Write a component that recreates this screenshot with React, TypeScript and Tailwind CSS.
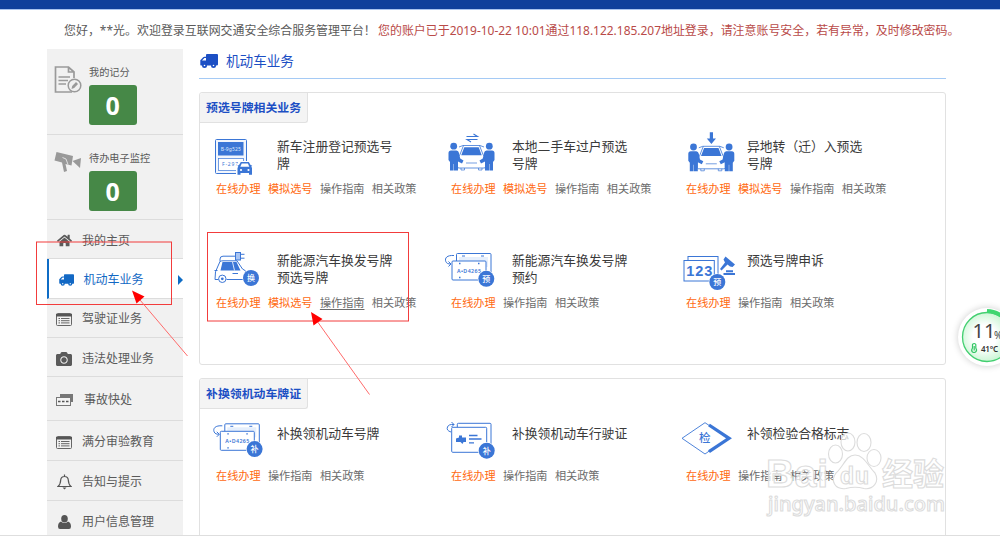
import React from 'react';
import { FaCamera, FaHome } from 'react-icons/fa';

const BLUE = '#3b76d6';

const Badge = ({ x, y, text }: { x: number; y: number; text: string }) => (
  <g>
    <circle cx={x} cy={y} r="8.6" fill="#fff" />
    <circle cx={x} cy={y} r="8" fill={BLUE} />
    <text x={x} y={y + 3} fontSize="8" fontWeight="500" fill="#fff" textAnchor="middle">{text}</text>
  </g>
);

const Curl = () => (
  <g fill="none" stroke={BLUE} strokeWidth="1">
    <path d="M19 11.5C12 11 9.500 14 10.800 17.500C11.500 19.500 13.500 20 15.500 20" />
    <path d="M13.500 17.500L16 20L13.500 22.500" />
  </g>
);

const TruckIcon = ({ width, height }: { width: number; height: number }) => (
  <svg width={width} height={height} viewBox="0 0 18 14" fill="currentColor">
    <path fillRule="evenodd" d="M7 0H17Q18 0 18 1V10.500Q18 11.600 16.500 11.600H1.200Q0 11.600 .3 10.300V6.200L3.200 3.200Q3.700 2.700 4.500 2.700H6V1Q6 0 7 0ZM2 6.500H6V4H4.400Z" />
    <circle cx="4.500" cy="11.500" r="2.500" />
    <circle cx="13.500" cy="11.500" r="2.500" />
    <circle cx="4.500" cy="11.500" r=".8" fill="#fff" />
    <circle cx="13.500" cy="11.500" r=".8" fill="#fff" />
  </svg>
);

const NewPlateIcon = () => (
  <g>
    <rect x="15.500" y="9.500" width="31" height="34" rx="1" fill="#f2f6fd" stroke={BLUE} />
    <rect x="18" y="12" width="25.500" height="13.500" fill={BLUE} />
    <text x="30.800" y="20.500" fontSize="5" fill="#dce8fb" textAnchor="middle" textLength="20">B-9g525</text>
    <rect x="18.500" y="28.500" width="25" height="12" fill="#fff" stroke={BLUE} strokeWidth=".7" />
    <text x="22" y="36" fontSize="5" fill={BLUE} textLength="16">F-297</text>
    <path d="M36 45V36L39 31H50L53 36V45Z" fill="#fff" />
    <path d="M37.500 44.800V38L38.300 36.500L37.300 35.700L39 35L40.800 32H48.800L50.600 35L52.300 35.700L51.300 36.500L52 38V44.800H49V43H40.500V44.800Z" fill={BLUE} />
    <path d="M41.700 33.500H47.900L49.300 36.800H40.300Z" fill="#fff" />
    <circle cx="41" cy="40" r="1.100" fill="#fff" />
    <circle cx="48.500" cy="40" r="1.100" fill="#fff" />
  </g>
);

const Person = () => (
  <g fill={BLUE}>
    <circle cx="18.700" cy="16.200" r="3.400" />
    <path d="M13.500 23Q13.500 20.500 16 20.500H21.500Q23.500 20.500 24 23L25.200 28.600L28.500 30.500L27 33.500L23 31.500V40.500H19V34H18.600V40.500H15V32L13.500 30Z" />
  </g>
);

const PeopleCar = () => (
  <g>
    <path d="M24 17L28 15.500H45L49 17M28.500 15.500L25 24.500L22.500 28V37Q22.500 38 24 38H49Q50.500 38 50.500 37V28L48 24.500L44.500 15.500" fill="none" stroke={BLUE} strokeWidth=".8" />
    <path d="M29.300 17.300H43.700L46.700 25.300H26.200Z" fill={BLUE} />
    <path d="M31 33H42M26 38V40H29.500V38M43.500 38V40H47V38" fill="none" stroke={BLUE} strokeWidth=".7" />
    <Person />
    <g transform="translate(73 0) scale(-1 1)"><Person /></g>
  </g>
);

const TransferIcon = () => (
  <g>
    <path d="M31.500 6.500H42.500L38.500 4M42.500 9.500H32L36 12" fill="none" stroke={BLUE} strokeWidth="1.100" />
    <PeopleCar />
  </g>
);

const MoveInIcon = () => (
  <g>
    <path d="M39.800 2.300H43V8.500H46L41.400 14L36.800 8.500H39.800Z" fill={BLUE} />
    <g transform="translate(4.800 .8)"><PeopleCar /></g>
  </g>
);

const EnergyCarIcon = () => (
  <g>
    <path d="M20 17.500V15Q20 12.200 23 12.200H35.500" fill="none" stroke={BLUE} />
    <rect x="35.500" y="8.500" width="5" height="7.500" fill="#a9c5f3" stroke={BLUE} />
    <path d="M41 10.300H44.500M41 14.200H44.500" stroke={BLUE} />
    <path d="M18.500 35.500H15Q14.500 27 18 22L20 17.500Q21 16.800 23 16.800H37L42.500 25Q46 26 47 30M26.500 35.500H43" fill="none" stroke={BLUE} />
    <path d="M22.500 18H36.500L40.500 26.500H20.500Z" fill={BLUE} />
    <path d="M32.500 18L34.500 26.500" stroke="#dce8fb" />
    <path d="M32.500 29.500H38M14.500 26.500H17.500" stroke={BLUE} />
    <circle cx="22.300" cy="34.800" r="3.700" fill="#fff" stroke={BLUE} />
    <circle cx="22.300" cy="34.800" r="1.400" fill={BLUE} />
    <Badge x={51} y={34} text="换" />
  </g>
);

const PlatesIcon = ({ text }: { text: string }) => (
  <g>
    <Curl />
    <rect x="21.500" y="9.500" width="34.500" height="24" rx="1" fill="#fff" stroke={BLUE} />
    <rect x="24" y="13" width="29" height="10" fill="#e6effc" />
    <path d="M27 12H30M46 12H49" stroke={BLUE} />
    <rect x="17" y="17" width="34" height="19" rx="1" fill="#fff" stroke={BLUE} />
    <path d="M24 19.500H25.500M43 19.500H44.500M24 33.500H25.500" stroke={BLUE} strokeWidth="1.300" />
    <text x="22" y="28.600" fontSize="5.300" fontWeight="600" fill={BLUE} textLength="24">A•D4265</text>
    <Badge x={51.3} y={34.800} text={text} />
  </g>
);

const AppealIcon = () => (
  <g>
    <rect x="18" y="12.500" width="30" height="21" fill="#fff" stroke={BLUE} />
    <rect x="14" y="16.500" width="30.300" height="20.500" fill="#fff" stroke={BLUE} />
    <text x="16.300" y="32.200" fontSize="14.500" fontWeight="700" fontFamily='"Liberation Sans", sans-serif' fill={BLUE} textLength="26">123</text>
    <path d="M55.500 12.500L65 20.500L62.500 23L60 22.500L57.500 20.500L51.500 26.500L50 25L55 18.500L53.500 15.500Z" fill={BLUE} />
    <path d="M56 27.300H63M53.500 30H65" stroke={BLUE} strokeWidth="1.900" />
    <Badge x={47.300} y={38} text="预" />
  </g>
);

const LicenseIcon = () => (
  <g>
    <path d="M16 15Q11 13.500 12.500 10Q13.500 7 19 7.500M16.500 5L19 7.500L16.500 10" fill="none" stroke={BLUE} />
    <rect x="22.300" y="6.300" width="33.700" height="26" rx="1" fill="#fff" stroke={BLUE} />
    <rect x="16.700" y="10.300" width="35" height="25" rx="1" fill="#fff" stroke={BLUE} />
    <path d="M21 21.500L24 20.500V18.500H27V20.500H31V25H28.500L27.500 27L25.500 25H21Z" fill={BLUE} />
    <path d="M34 18.500H42.500M34 22H46.500M34 25.800H39" stroke={BLUE} strokeWidth="1.300" />
    <Badge x={51.700} y={33.700} text="补" />
  </g>
);

const InspectIcon = () => (
  <g>
    <path d="M40 9L35 5.700L12 21.300L35 37L40 33.500" fill="none" stroke={BLUE} strokeWidth=".9" />
    <path d="M39 8L59 21.300L39 34.700" fill="none" stroke={BLUE} strokeWidth="3.300" />
    <text x="34.700" y="25.300" fontSize="11.500" fontWeight="500" fill={BLUE} textAnchor="middle">检</text>
  </g>
);

interface Service {
  title: string;
  icon: React.ReactNode;
  pick?: boolean;
  underline?: boolean;
}

const plateServices: Service[] = [
  { title: '新车注册登记预选号牌', icon: <NewPlateIcon />, pick: true },
  { title: '本地二手车过户预选号牌', icon: <TransferIcon />, pick: true },
  { title: '异地转（迁）入预选号牌', icon: <MoveInIcon />, pick: true },
  { title: '新能源汽车换发号牌预选号牌', icon: <EnergyCarIcon />, pick: true, underline: true },
  { title: '新能源汽车换发号牌预约', icon: <PlatesIcon text="预" /> },
  { title: '预选号牌申诉', icon: <AppealIcon /> },
];

const reissueServices: Service[] = [
  { title: '补换领机动车号牌', icon: <g transform="translate(3.300 -2.700)"><PlatesIcon text="补" /></g> },
  { title: '补换领机动车行驶证', icon: <LicenseIcon /> },
  { title: '补领检验合格标志', icon: <InspectIcon /> },
];

const ServiceCard = ({ item }: { item: Service }) => (
  <div className="h-[113.5px]">
    <div className="flex h-[52px]">
      <svg width="77" height="52" className="shrink-0 overflow-visible">{item.icon}</svg>
      <h3 className="w-[117px] pt-[8px] text-[12.8px] leading-[17px] text-[#3a3a3a]">{item.title}</h3>
    </div>
    <div className="flex gap-[7.4px] pl-[16px] text-[11.15px] leading-[14px] whitespace-nowrap text-[#6c6c6c]">
      <a className="text-[#ff6a10]">在线办理</a>
      {item.pick && <a className="text-[#ff6a10]">模拟选号</a>}
      <a className={item.underline ? 'underline underline-offset-2' : ''}>操作指南</a>
      <a>相关政策</a>
    </div>
  </div>
);

const Panel = ({ title, items, className }: { title: string; items: Service[]; className: string }) => (
  <section className={`rounded-[3px] border border-[#e1e1e1] ${className}`}>
    <h2 className="h-[30px] w-[108px] rounded-tl-[3px] rounded-br-[3px] border-r border-b border-[#e1e1e1] bg-[#f4f4f4] pl-[6px] text-[11.9px] leading-[28px] font-bold whitespace-nowrap text-[#1c4fc4]">{title}</h2>
    <div className="grid grid-cols-[235px_235px_235px] pt-[7px]">
      {items.map((item) => <ServiceCard key={item.title} item={item} />)}
    </div>
  </section>
);

const ListIcon = () => (
  <svg width="16" height="13" viewBox="0 0 16 13">
    <rect x=".5" y=".5" width="15" height="12" rx="1" fill="none" stroke="#666" />
    <path d="M0 1H16V3.500H0Z" fill="#555" />
    <path d="M2.500 5.500H4M5 5.500H13.500M2.500 7.700H4M5 7.700H13.500M2.500 9.900H4M5 9.900H13.500" stroke="#666" />
  </svg>
);

const BellIcon = () => (
  <svg width="15" height="16" viewBox="0 0 15 16" fill="none" stroke="#555" strokeWidth="1.200">
    <path d="M1 12.500Q3.500 10.500 3.700 6Q4 2.500 7.500 2.500Q11 2.500 11.300 6Q11.500 10.500 14 12.500ZM7.500 .5V2.500" />
    <path d="M5.500 13.500H9.500L7.500 15.500Z" fill="#555" stroke="none" />
  </svg>
);

const CrashIcon = () => (
  <svg width="17" height="12" viewBox="0 0 17 12">
    <path d="M4 0H17V8H14.500V3H4Z" fill="#777" />
    <rect x=".5" y="3.500" width="14" height="8" fill="#f4f4f4" stroke="#777" />
    <path d="M2 7.500H13" stroke="#555" strokeWidth="1.700" strokeDasharray="2.500 1.500" />
  </svg>
);

const UserIcon = () => (
  <svg width="13" height="14" viewBox="0 0 13 14" fill="#555">
    <ellipse cx="6.500" cy="3.800" rx="3.300" ry="3.800" />
    <path d="M3 6.500Q6.500 9.500 10 6.500Q13 7.500 13 11.500Q13 14 11 14H2Q0 14 0 11.500Q0 7.500 3 6.500Z" />
  </svg>
);

const menu = [
  { label: '我的主页', icon: <FaHome size={15} />, cls: 'h-[39px] pt-[3px]' },
  { label: '机动车业务', icon: <TruckIcon width={15} height={12} />, cls: 'h-[40px] pt-[3px]', active: true },
  { label: '驾驶证业务', icon: <ListIcon />, cls: 'h-[39px] pt-[2px]' },
  { label: '违法处理业务', icon: <FaCamera size={16} />, cls: 'h-[39px] pt-[3px]' },
  { label: '事故快处', icon: <CrashIcon />, cls: 'h-[44px] pt-[2px]' },
  { label: '满分审验教育', icon: <ListIcon />, cls: 'h-[40px] pt-[3px]' },
  { label: '告知与提示', icon: <BellIcon />, cls: 'h-[40px] pt-[2px]' },
  { label: '用户信息管理', icon: <UserIcon />, cls: 'h-[40px] pt-[2px]' },
];

const Counter = ({ label, icon }: { label: string; icon: React.ReactNode }) => (
  <div className="flex h-[85.5px] border-b border-[#dcdcdc] pt-[15px] pl-[7.5px]">
    <div className="w-[35px] shrink-0">{icon}</div>
    <div>
      <div className="text-[10.2px] leading-[16px] whitespace-nowrap text-[#5a5a5a]">{label}</div>
      <div className="mt-[5px] h-[40px] w-[47.5px] rounded-[3px] bg-[#468847] text-center text-[25px] leading-[41px] font-bold text-white">0</div>
    </div>
  </div>
);

const Sidebar = () => (
  <aside className="ml-[46.5px] w-[136px] shrink-0 bg-[#f1f1f1]">
    <Counter
      label="我的记分"
      icon={
        <svg width="28" height="30" fill="none" stroke="#9a9a9a" strokeWidth="1.700">
          <path d="M20 14V8L14.500 3H1.500V28H18M14.500 3V8H20M4.500 13H16M4.500 16.500H14M4.500 20H12" />
          <circle cx="20.500" cy="21.500" r="6.300" fill="#f1f1f1" strokeWidth="1.500" />
          <path d="M17.500 25L18.200 22L22 18L24 20L20.200 24Z" fill="#9a9a9a" stroke="none" />
        </svg>
      }
    />
    <Counter
      label="待办电子监控"
      icon={
        <svg width="28" height="30" fill="#999">
          <path d="M2.500 2L19 6L17.500 15.500L11.500 14L13 21L10 22L8 12.500L.5 10.500Z" />
          <path d="M18.500 11L27 8L26 18Z" />
          <path d="M8.500 7.500L12 9L14 14.500" fill="none" stroke="#f1f1f1" strokeWidth=".8" />
        </svg>
      }
    />
    {menu.map((m) => (
      <div
        key={m.label}
        className={`flex items-center border-b border-[#dcdcdc] text-[12px] whitespace-nowrap ${m.cls} ${m.active ? 'border-l-2 border-l-[#0f6cc5] bg-white text-[#1268c4]' : 'text-[#5a5a5a]'}`}
      >
        <span className={`flex shrink-0 justify-center ${m.active ? 'w-[35px]' : 'w-[35.5px]'}`}>{m.icon}</span>
        <span className={m.label === '事故快处' ? 'pl-[2px]' : ''}>{m.label}</span>
        {m.active && <span className="ml-auto border-y-[5px] border-l-[5px] border-y-transparent border-l-[#0f6cc5]" />}
      </div>
    ))}
  </aside>
);

// hand-drawn red marks over the page
const Marks = () => (
  <svg className="absolute top-0 left-0" width="1000" height="539" fill="none" stroke="#f23c3c">
    <rect x="36.500" y="242" width="135" height="62.500" />
    <rect x="207.500" y="232.500" width="201" height="88.500" />
    <path d="M140 300L187.500 356M317 321L369.500 394.500" stroke="#ff6b6b" />
    <path d="M132 290.500L144.500 296.500L136.500 303.500ZM311 312L322.500 319L313.500 325.500Z" fill="#ff0000" stroke="none" />
  </svg>
);

const Watermark = () => (
  <svg className="absolute top-0 left-0" width="1000" height="539" fill="#ffffff" fillOpacity=".75" stroke="#dcdcdc" strokeWidth="1.100" fontFamily='"Liberation Sans", "Noto Sans CJK SC", sans-serif'>
    <g fontWeight="700">
      <text x="766" y="487" fontSize="39" textLength="62">Bai</text>
      <ellipse cx="835.500" cy="454" rx="7" ry="9" />
      <ellipse cx="848" cy="442" rx="7" ry="9" />
      <ellipse cx="864" cy="442.500" rx="7" ry="9" />
      <ellipse cx="874" cy="458" rx="7" ry="8.500" />
      <path d="M855 455C864 455 868 466 875 473C880 482 873 490 864 488.500Q855 486 846 488.500C835 490 830 481 836 473C844 466 846 455 855 455Z" />
      <text x="840" y="484" fontSize="23" textLength="29">du</text>
      <text x="882" y="485" fontSize="31" textLength="62">经验</text>
    </g>
    <text x="768" y="511" fontSize="20" fontWeight="500" fontFamily='"Noto Sans", sans-serif' textLength="177">jingyan.baidu.com</text>
  </svg>
);

const Monitor = () => (
  <div className="absolute top-[308px] left-[958px] h-[58px] w-[58px] rounded-full bg-white shadow-[0_0_7px_rgba(0,0,0,0.2)]">
    <svg width="58" height="58">
      <defs>
        <radialGradient id="glow" cx=".45" cy=".5" r=".6">
          <stop offset=".4" stopColor="#fff" />
          <stop offset="1" stopColor="#b9f3c6" />
        </radialGradient>
      </defs>
      <circle cx="29" cy="29" r="24.500" fill="url(#glow)" stroke="#43cf70" strokeWidth="1.300" />
      <path d="M29 3A26 26 0 0 1 47 11" fill="none" stroke="#3fd670" strokeWidth="4" />
      <text x="14.500" y="30" fontSize="20" fill="#444">11</text>
      <text x="36" y="30.500" fontSize="10" fill="#444">%</text>
      <text x="23" y="44" fontSize="8" fontWeight="600" fill="#333" textLength="17">41°C</text>
      <path d="M14.500 36.500Q16.200 34.500 17.800 36.500V40Q19.500 42.500 17.500 44Q16 45 14.500 44Q12.800 42.500 14.500 40ZM16.200 38V42.500" fill="none" stroke="#35c766" strokeWidth="1.200" />
    </svg>
  </div>
);

const App: React.FC = () => {
  return (
    <div className={`relative h-[539px] w-[1000px] overflow-hidden bg-white font-['Noto_Sans','Noto_Sans_CJK_SC',sans-serif]`}>
      <div className="h-[10px] border-b border-[#a9c4ee] bg-[#0f409b]" />
      <header className="flex h-[39px] items-center pt-[3px] pl-[64px] text-[11.95px] whitespace-nowrap text-[#5a5a5a]">
        <span className="w-[73px]">您好，**光。</span>
        <span className="w-[241px]">欢迎登录互联网交通安全综合服务管理平台！</span>
        <span className="text-[#b94a48]">您的账户已于2019-10-22 10:01通过118.122.185.207地址登录，请注意账号安全，若有异常，及时修改密码。</span>
      </header>
      <div className="flex h-[486px] overflow-hidden">
        <Sidebar />
        <main className="ml-[16.5px] w-[747px] shrink-0">
          <div className="flex h-[30px] items-center gap-[8px] border-b border-[#a5caf5] pb-[5px] pl-px text-[13.6px] text-[#1c4fc4]">
            <TruckIcon width={18} height={14} />
            机动车业务
          </div>
          <Panel title="预选号牌相关业务" items={plateServices} className="mt-[13px] h-[273px]" />
          <Panel title="补换领机动车牌证" items={reissueServices} className="mt-[13px] h-[220px] [&>div]:pt-[8px]" />
        </main>
      </div>
      <div className="border-t border-[#dedede]" />
      <Watermark />
      <Monitor />
      <Marks />
    </div>
  );
};

export default App;
